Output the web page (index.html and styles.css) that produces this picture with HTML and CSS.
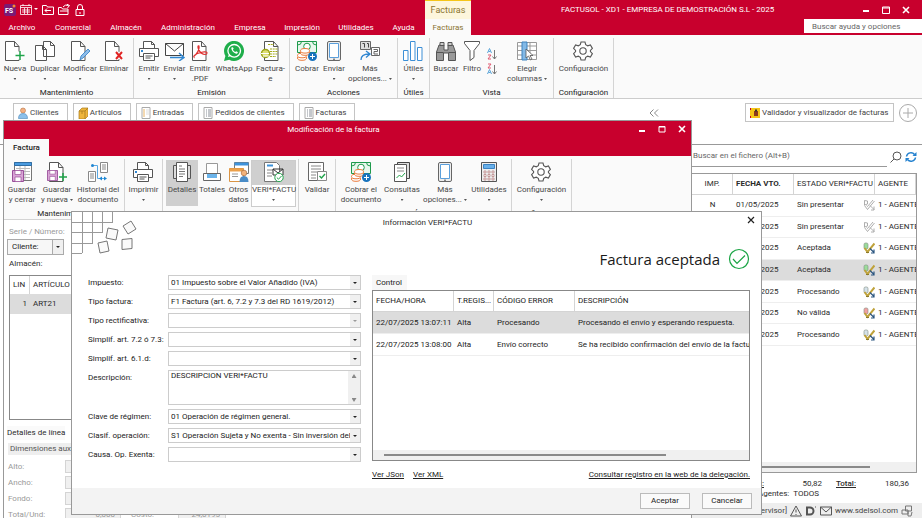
FILE: index.html
```html
<!DOCTYPE html>
<html lang="es">
<head>
<meta charset="utf-8">
<title>FACTUSOL</title>
<link rel="stylesheet" href="styles.css">
</head>
<body>
<svg class="sprite" aria-hidden="true">
  <symbol id="page" viewBox="0 0 20 20"><path d="M2.500 .5h9l4.500 5v14h-13.500zM11.500 .5v5h4.500" fill="#fff" stroke="#555"/></symbol>
  <symbol id="new" viewBox="0 0 20 20"><use href="#page" x="-2"/><path d="M15 10.500v8M11 14.500h8" stroke="#fff" stroke-width="4"/><path d="M15 10v9M10.500 14.500h9" stroke="#1fa34a" stroke-width="1.500"/></symbol>
  <symbol id="copy" viewBox="0 0 20 20"><path d="M8.500 .5h7l4 4v11h-11zM15.500 .5v4h4M.5 4.500h7l4 4v11h-11zM7.500 4.500v4h4" fill="#fff" stroke="#555"/></symbol>
  <symbol id="edit" viewBox="0 0 20 20"><use href="#page" x="-1"/><path d="M10 19l1-4 7-7 2 2-7 7z" fill="#8dbdea" stroke="#2f7cc4" stroke-width=".8"/></symbol>
  <symbol id="delete" viewBox="0 0 20 20"><use href="#page" x="-1"/><path d="M12 11l6 7M18 11l-6 7" stroke="#fff" stroke-width="4"/><path d="M12 11l6 7M18 11l-6 7" stroke="#e02424" stroke-width="2"/></symbol>
  <symbol id="printer" viewBox="0 0 20 20"><path d="M4.500 7V.5h8l3 3V7M12.500 .5v3h3" fill="#fff" stroke="#555"/><path d="M.5 7.500h19v8H.5z" fill="#fff" stroke="#555"/><path d="M4.500 12.500h11v7h-11zM6.500 15h7M6.500 17h5" fill="#fff" stroke="#555"/><path d="M2 9h2v2H2z" fill="#2f86d1"/></symbol>
  <symbol id="mail" viewBox="0 0 20 20"><path d="M.5 2.500h18v12H.5zL9.500 10l9-7.500" fill="#fff" stroke="#444"/><path d="M5 16.500h13M14 12l5 4.500-5 3.500" fill="none" stroke="#2f86d1" stroke-width="1.400"/></symbol>
  <symbol id="pdf" viewBox="0 0 20 20"><use href="#page"/><path d="M4 15c3-2 6-7 5-10-2-1-1 4 2 7 3 2 6 2 6 0s-5-1-8 0-6 3-5 4z" fill="none" stroke="#e02f2f" stroke-width="1.200"/></symbol>
  <symbol id="whats" viewBox="0 0 20 20"><path d="M0 20l1.400-5A10 10 0 1 1 5.200 18.700z" fill="#1fae4b"/><circle cx="10.200" cy="9.800" r="6.300" fill="none" stroke="#fff" stroke-width="1.300"/><path d="M4 16l1-3 2 2z" fill="#fff"/><path d="M7.500 6.500c-1 2 2.500 6.500 5.500 6.300l1-1.600-1.800-1-1 .8c-1-.3-2-1.500-2.300-2.400l.8-.8-.8-1.600z" fill="#fff"/></symbol>
  <symbol id="efact" viewBox="0 0 20 20"><use href="#page" x="2"/><path d="M8 3.500h6M10 8h8M10 10.500h8M10 13h8M10 15.500h6" stroke="#a5ab1c" stroke-dasharray="2 .7"/><circle cx="5.500" cy="12.500" r="4" fill="#dede74" stroke="#9ba315" stroke-width="1.500"/><path d="M1 12.500h8M3 15h6" stroke="#fff"/></symbol>
  <symbol id="cash" viewBox="0 0 20 20"><path d="M.5 .5h19v11H.5z" fill="#e9f7ed" stroke="#1f9a4c"/><circle cx="10" cy="5.500" r="3.300" fill="#fff" stroke="#1f9a4c"/><path d="M.5 4q4 0 4-3.500M15.500 .5q0 3.500 4 3.500" fill="none" stroke="#1f9a4c"/><g fill="#fff" stroke="#ea7a3b"><ellipse cx="5" cy="17" rx="4.500" ry="2.300"/><ellipse cx="5" cy="14.500" rx="4.500" ry="2.300"/><ellipse cx="8" cy="12" rx="4.500" ry="2.300"/><ellipse cx="8" cy="9.800" rx="4.500" ry="2.300"/></g><circle cx="15.500" cy="15.500" r="4.500" fill="#1873bd"/><path d="M15.500 13v5M13 15.500h5" stroke="#fff"/></symbol>
  <symbol id="phone" viewBox="0 0 20 20"><rect x="3.500" y=".5" width="13" height="19" rx="1.500" fill="#eee" stroke="#666"/><path d="M5.500 2.500h9v14h-9z" fill="#fff" stroke="#5b9fdb"/><path d="M9 18.200h2" stroke="#555"/></symbol>
  <symbol id="more" viewBox="0 0 20 20"><path d="M.5 .5h10v8H.5z" fill="#ddd" stroke="#666"/><path d="M2.500 2.500h2v4M7 2.500h1.500v4" fill="none" stroke="#444"/><path d="M11.500 6.500h8v8h-8zM13.500 8.500h4v2h-3.500v2.500h4" fill="#fff" stroke="#666"/><path d="M1 19q0-6 8-6M6 10l4 3-4 3.500" fill="none" stroke="#2f86d1" stroke-width="1.300"/></symbol>
  <symbol id="bars" viewBox="0 0 20 20"><path d="M.5 9.500h4.500v10H.5zM7.500 .5h4.500v19h-4.500zM14.500 6.500H19v13h-4.500z" fill="#fff" stroke="#3c8fd6"/></symbol>
  <symbol id="binoc" viewBox="0 0 20 20"><path d="M3 4h5v5h4V4h5l2.500 7v8.500h-7V12h-5v7.500h-7V11z" fill="#999" stroke="#555"/><path d="M4 1.500h4v3H4zM12 1.500h4v3h-4zM.5 11.500h7M12.500 11.500h7" fill="#ccc" stroke="#555"/></symbol>
  <symbol id="funnel" viewBox="0 0 20 20"><path d="M2.500 .5h15v2l-5.500 7v7l-4 3v-10l-5.500-7z" fill="#fff" stroke="#555"/></symbol>
  <symbol id="columns" viewBox="0 0 20 20"><path d="M.5 1.500h19v17H.5zM.5 5h19M.5 9.500h19M.5 14h19M7 1.500v17M13 1.500v17" fill="#fff" stroke="#999"/><path d="M5 1h5v18H5z" fill="#83b9e6" stroke="#3f83bd"/><path d="M9 8v9l2.500-2 2 4 1.500-1-2-3.500h3z" fill="#fff" stroke="#555" stroke-width=".8"/></symbol>
  <symbol id="gear" viewBox="0 0 20 20"><path d="M8 1h4l.7 2.700 2 1.100 2.700-.8 2 3.400-2 2v1.200l2 2-2 3.400-2.700-.8-2 1.100L12 19H8l-.7-2.700-2-1.100-2.700.8-2-3.400 2-2V9.400l-2-2 2-3.400 2.700.8 2-1.100z" fill="#fff" stroke="#555" stroke-width="1.100"/><circle cx="10" cy="10" r="3.200" fill="#fff" stroke="#555" stroke-width="1.100"/></symbol>
  <symbol id="floppy" viewBox="0 0 12 12"><path d="M.5 .5h11v11H.5z" fill="#d9a4d6" stroke="#99509a"/><path d="M3 .5h6v4H3zM3 7h6v4.500H3z" fill="#fff" stroke="#99509a" stroke-width=".7"/></symbol>
  <symbol id="saveclose" viewBox="0 0 20 20"><path d="M2.500 .5h17v18h-17z" fill="#fff" stroke="#777"/><path d="M2.500 .5h17v3h-17z" fill="#4a9be0" stroke="#2f6ea5"/><path d="M4 6.500h14M4 9.500h14M4 12.500h14M4 15.500h14M8 4v12M13 4v14" stroke="#bbb"/><use href="#floppy" x="0" y="8" width="12" height="12"/></symbol>
  <symbol id="savenew" viewBox="0 0 20 20"><use href="#page"/><use href="#floppy" x="0" y="8" width="11" height="11"/><path d="M16 11v8M12 15h8" stroke="#1fa34a" stroke-width="1.500"/></symbol>
  <symbol id="history" viewBox="0 0 20 20"><path d="M12.500 .5h7v10h-7zM.5 9.500h7v10h-7zM14 3h4M14 5h4M14 7h4M2 12h4M2 14h4M2 16h4" fill="#fff" stroke="#888"/><path d="M5 3.500h4.500v13H18" fill="none" stroke="#58a8e4"/><circle cx="4.500" cy="3.500" r="1.500" fill="#1e86d2"/><path d="M11 16.500l3-2v4zM19 16.500l-3-2v4z" fill="#1e86d2"/></symbol>
  <symbol id="details" viewBox="0 0 20 20"><path d="M1.500 3.500h17v13h-17z" fill="#ddd" stroke="#555"/><path d="M4.500 .5h11v19h-11z" fill="#fff" stroke="#555"/><path d="M7 4h3M7 7h6M7 9.500h6M7 12h6M7 14.500h4" stroke="#777"/></symbol>
  <symbol id="totals" viewBox="0 0 20 20"><path d="M4.500 1.500h11v14h-11z" fill="#fff" stroke="#999"/><path d="M1.500 11.500h17v7h-17z" fill="#fff" stroke="#666"/><path d="M5 12h10v4H5z" fill="#6ab3ea"/></symbol>
  <symbol id="other" viewBox="0 0 20 20"><path d="M5.500 .5h14v11h-14z" fill="#fff" stroke="#777"/><path d="M5.500 .5h14v3h-14z" fill="#3f93db"/><path d="M.5 6.500h14v13H.5z" fill="#fff" stroke="#d99444"/><path d="M.5 6.500h14v3H.5z" fill="#eca04a"/><path d="M3 12h6M3 14.500h6" stroke="#999"/><circle cx="15" cy="11" r="2.800" fill="#f2b27b" stroke="#9c6236" stroke-width=".6"/><path d="M10.500 20q0-6 4.500-6t4.500 6z" fill="#4a8cc7"/></symbol>
  <symbol id="verified" viewBox="0 0 20 20"><path d="M.5 .5h12l3 3v16H.5z" fill="#fff" stroke="#777"/><path d="M3 3.500h6" stroke="#3c93da" stroke-width="2"/><path d="M3 8h7M3 11h5M3 14h5" stroke="#888"/><path d="M9 7h10v6H9zM9 7l5 4 5-4" fill="#fff" stroke="#333"/><circle cx="15" cy="15.500" r="4.200" fill="#fff" stroke="#1fa34a"/><path d="M12.800 15.500l1.700 1.700 3-3.200" fill="none" stroke="#1fa34a"/></symbol>
  <symbol id="validate" viewBox="0 0 20 20"><path d="M1.500 .5h15v18h-15z" fill="#fff" stroke="#666"/><path d="M4 4h10M4 7h10M4 10h6M4 13h5M4 16h5" stroke="#888"/><path d="M10.500 9.500h9v9h-9z" fill="#fff" stroke="#888"/><path d="M12.500 14l2 2 3.500-4" fill="none" stroke="#1fa34a" stroke-width="1.400"/></symbol>
  <symbol id="queries" viewBox="0 0 20 20"><path d="M5.500 .5h12v16h-12z" fill="#ddd" stroke="#444"/><path d="M2.500 2.500h12v17h-12z" fill="#fff" stroke="#555"/><path d="M5 6h7M5 9h7" stroke="#888"/><path d="M4.500 16l3-3 2 2 3.500-4" fill="none" stroke="#1fa34a"/></symbol>
  <symbol id="calc" viewBox="0 0 20 20"><path d="M2.500 .5h15v19h-15z" fill="#eee" stroke="#555"/><path d="M4.500 2.500h11v4h-11z" fill="#68b0ea" stroke="#3c83c2"/><path d="M5 9h2v2H5zM9 9h2v2H9zM13 9h2v2h-2zM5 12.500h2v2H5zM9 12.500h2v2H9zM13 12.500h2v2h-2zM5 16h2v2H5zM9 16h2v2H9zM13 16h2v2h-2z" fill="#fff" stroke="#a66" stroke-width=".6"/></symbol>
  <symbol id="doc" viewBox="0 0 10 12"><path d="M1 .5h8v11H1z" fill="#fff" stroke="#aaa"/><path d="M3 3h1M5 3h3M3 5h1M5 5h3M3 7h1M5 7h3M3 9h1M5 9h3" stroke="#8a9099"/></symbol>
  <symbol id="signed" viewBox="0 0 12 12"><rect x="1" y="1" width="4" height="6" rx="1.500" fill="currentColor" stroke="#7d8a7d" stroke-width=".6"/><path d="M1.500 6l3 4 7-8.500" fill="none" stroke="#bfa23a" stroke-width="2"/><path d="M3 10.500h3" stroke="#8c7a2c"/><path d="M7 6.500l4 4M11 7.500v3.500H8" fill="none" stroke="#2b5680" stroke-width="1.200"/></symbol>
  <symbol id="unsigned" viewBox="0 0 12 12"><path d="M1.500 1.500l3 .5v3l-3 1zM1.500 6.500l3 4 7-8.500M3.500 6.500l1 1L10 1M7 6.500l4 4M11 7.500v3.500H8" fill="none" stroke="#999" stroke-width=".8"/></symbol>
</svg>

<div class="app">
  <header class="titlebar">
    <div class="quick">
      <svg class="logo" viewBox="0 0 12 12"><rect x="0" y="0" width="12" height="12" rx="2" fill="#7b1a75"/><circle cx="10" cy="2" r="1.500" fill="#ff8a2a"/><text x="1" y="9" class="logo-text">FS</text></svg>
      <svg class="calendar" viewBox="0 0 18 12"><path d="M.5 1.500h11v9H.5zM.5 3.500h11M3 0v2M9 0v2M2 6h8M2 8h8M4.500 4v6M7.500 4v6" fill="none" stroke="#fff" stroke-width=".8"/><path d="M14 4h4l-2 2z" fill="#fff"/></svg>
      <svg viewBox="0 0 12 12"><path d="M.5 10.500v-9h4l1 1.500h6v7.500zM3 6.500h6M5 4.500l-2 2 2 2" fill="none" stroke="#fff"/></svg>
      <svg viewBox="0 0 12 12"><path d="M.5 10.500V3.500h3l1 1.500h5.500v5.500zM5 3q2-3 5.500-1.500M8.500 0l3 1.500-2 2.500M2 7h8" fill="none" stroke="#fff"/></svg>
      <svg viewBox="0 0 12 12"><path d="M2 5.500h8v6H2zM3.500 5.500V3a2.500 2.500 0 0 1 5 0v2.500M6 8v2" fill="none" stroke="#fff"/></svg>
    </div>
    <div class="context-title">Facturas</div>
    <h1>FACTUSOL - XD1 - EMPRESA DE DEMOSTRACIÓN S.L - 2025</h1>
    <div class="win-controls">
      <button aria-label="Minimizar"><svg viewBox="0 0 8 8"><path d="M1 5h6" stroke="#fff" stroke-width="2"/></svg></button>
      <button aria-label="Maximizar"><svg viewBox="0 0 8 8"><path d="M.5 1h7v6.500h-7zM.5 2h7" fill="none" stroke="#fff"/></svg></button>
      <button aria-label="Cerrar"><svg viewBox="0 0 8 8"><path d="M1 1l6 6M7 1L1 7" stroke="#fff" stroke-width="1.600"/></svg></button>
    </div>
  </header>
  <nav class="menubar">
    <a href="#">Archivo</a><a href="#">Comercial</a><a href="#">Almacén</a><a href="#">Administración</a><a href="#">Empresa</a><a href="#">Impresión</a><a href="#">Utilidades</a><a href="#">Ayuda</a><a href="#" class="current">Facturas</a>
    <input class="help-search" type="text" placeholder="Buscar ayuda y opciones" aria-label="Buscar ayuda y opciones">
  </nav>

  <div class="ribbon main-ribbon">
    <section class="group g-maint"><div class="tools">
      <button><svg><use href="#new"/></svg>Nueva<i class="caret"></i></button>
      <button><svg><use href="#copy"/></svg>Duplicar<i class="caret"></i></button>
      <button><svg><use href="#edit"/></svg>Modificar<i class="caret"></i></button>
      <button><svg><use href="#delete"/></svg>Eliminar</button></div><h2>Mantenimiento</h2></section>
    <section class="group g-emit"><div class="tools">
      <button><svg><use href="#printer"/></svg>Emitir<i class="caret"></i></button>
      <button><svg><use href="#mail"/></svg>Enviar<i class="caret"></i></button>
      <button><svg><use href="#pdf"/></svg>Emitir<br>.PDF</button>
      <button><svg><use href="#whats"/></svg>WhatsApp</button>
      <button><svg><use href="#efact"/></svg>Factura-<br>e</button></div><h2>Emisión</h2></section>
    <section class="group g-actions"><div class="tools">
      <button><svg><use href="#cash"/></svg>Cobrar</button>
      <button><svg><use href="#phone"/></svg>Enviar<i class="caret"></i></button>
      <button><svg><use href="#more"/></svg>Más<br>opciones... <i class="caret inline"></i></button></div><h2>Acciones</h2></section>
    <section class="group g-utils"><div class="tools">
      <button><svg><use href="#bars"/></svg>Útiles<i class="caret"></i></button></div><h2>Útiles</h2></section>
    <section class="group g-view"><div class="tools">
      <button><svg><use href="#binoc"/></svg>Buscar</button>
      <button><svg><use href="#funnel"/></svg>Filtro</button>
      <div class="sorters">
        <button aria-label="Orden ascendente"><svg viewBox="0 0 10 12"><path d="M.5 5L2.500 .5l2 4.500M1.500 3.500h2" fill="none" stroke="#5aa5d8"/><path d="M1 7h3l-3 4h3" fill="none" stroke="#e05a72"/><path d="M7.500 2v9M5.500 8.500l2 2.500 2-2.500" fill="none" stroke="#777"/></svg></button>
        <button aria-label="Orden descendente"><svg viewBox="0 0 10 12"><path d="M1 1h3l-3 4h3" fill="none" stroke="#e05a72"/><path d="M.5 11l2-4.500 2 4.500M1.500 9.500h2" fill="none" stroke="#5aa5d8"/><path d="M7.500 2v9M5.500 8.500l2 2.500 2-2.500" fill="none" stroke="#777"/></svg></button>
      </div>
      <button><svg><use href="#columns"/></svg>Elegir<br>columnas <i class="caret inline"></i></button></div><h2>Vista</h2></section>
    <section class="group g-config"><div class="tools">
      <button><svg><use href="#gear"/></svg>Configuración</button></div><h2>Configuración</h2></section>
  </div>

  <div class="shortcuts">
    <button><svg viewBox="0 0 10 12"><circle cx="5" cy="3.500" r="2.500" fill="#f4b183" stroke="#b57444" stroke-width=".6"/><path d="M.5 11.500q0-5 4.500-5t4.500 5z" fill="#8cc0ea" stroke="#4986b8" stroke-width=".6"/></svg>Clientes</button>
    <button><svg viewBox="0 0 10 12"><path d="M1 4l3-3h6v8l-3 3H1z" fill="#efb63c" stroke="#a97c1e" stroke-width=".7"/><path d="M1 4h6v8M7 4l3-3M4 4v3" fill="none" stroke="#a97c1e" stroke-width=".8"/></svg>Artículos</button>
    <button><svg viewBox="0 0 10 12"><path d="M1 .5h8v11H1z" fill="#fff" stroke="#aaa"/><path d="M3 2v8" stroke="#eab464"/><path d="M5 3h3M5 5h3M5 7h3" stroke="#ddd"/></svg>Entradas</button>
    <button><svg><use href="#doc"/></svg>Pedidos de clientes</button>
    <button><svg><use href="#doc"/></svg>Facturas</button>
    <button class="collapse" aria-label="Contraer"><svg viewBox="0 0 10 8"><path d="M4.500 .5L1 4l3.500 3.500M9 .5L5.500 4 9 7.500" fill="none" stroke="#888"/></svg></button>
    <button class="validator"><svg viewBox="0 0 10 12"><path d="M0 1h10v10H0z" fill="#f5c518"/><path d="M0 1h1v2H0zM0 9h1v2H0z" fill="#c8002d"/><path d="M4 4h4v5H4z" fill="#8b3a1d"/><path d="M5 2.500h2v2H5z" fill="#333"/></svg>Validador y visualizador de facturas</button>
    <button class="add" aria-label="Añadir"><svg viewBox="0 0 18 18"><circle cx="9" cy="9" r="8.500" fill="#fff" stroke="#aaa"/><path d="M9 4v10M4 9h10" stroke="#aaa"/></svg></button>
  </div>

  <main class="records">
    <div class="file-search">
      <input type="text" placeholder="Buscar en el fichero (Alt+B)" aria-label="Buscar en el fichero">
      <svg viewBox="0 0 12 12"><circle cx="7" cy="5" r="4" fill="none" stroke="#555"/><path d="M4 8l-3.500 3.500" stroke="#555"/></svg>
      <svg viewBox="0 0 12 12"><path d="M1.500 5.500A4.500 4.500 0 0 1 9.500 3.500M10.500 6.500a4.500 4.500 0 0 1-8 2" fill="none" stroke="#2381cf" stroke-width="1.500"/><path d="M11.500 1v4h-4zM.5 11V7h4z" fill="#2381cf"/></svg>
    </div>
    <div class="record-box">
      <table>
        <colgroup><col class="c-imp"><col class="c-date"><col class="c-state"><col class="c-agent"></colgroup>
        <thead><tr><th>IMP.</th><th><b>FECHA VTO.</b></th><th>ESTADO VERI*FACTU</th><th>AGENTE</th></tr></thead>
        <tbody>
          <tr><td>N</td><td>01/05/2025</td><td>Sin presentar<svg><use href="#unsigned"/></svg></td><td>1 - AGENTE</td></tr>
          <tr><td>N</td><td>01/05/2025</td><td>Sin presentar<svg><use href="#unsigned"/></svg></td><td>1 - AGENTE</td></tr>
          <tr><td>N</td><td>01/05/2025</td><td>Aceptada<svg class="ok"><use href="#signed"/></svg></td><td>1 - AGENTE</td></tr>
          <tr class="selected"><td>N</td><td>01/05/2025</td><td>Aceptada<svg class="ok"><use href="#signed"/></svg></td><td>1 - AGENTE</td></tr>
          <tr><td>N</td><td>01/05/2025</td><td>Procesando<svg class="wait"><use href="#signed"/></svg></td><td>1 - AGENTE</td></tr>
          <tr><td>N</td><td>01/05/2025</td><td>No válida<svg class="bad"><use href="#signed"/></svg></td><td>1 - AGENTE</td></tr>
          <tr><td>N</td><td>01/05/2025</td><td>Procesando<svg class="wait"><use href="#signed"/></svg></td><td>1 - AGENTE</td></tr>
        </tbody>
      </table>
      <div class="hscroll"><span></span></div>
    </div>
    <div class="totals"><a href="#">Base:</a><span>50,82</span><a href="#">Total:</a><span>180,36</span></div>
    <div class="agents"><span>Agentes:</span><span>TODOS</span></div>
    <footer class="status">
      <span>[Supervisor]</span>
      <svg viewBox="0 0 12 12"><path d="M6 1l5.500 10H.5zM6 4.500v3M6 9v1" fill="none" stroke="#555"/></svg>
      <svg viewBox="0 0 12 12"><path d="M2 2.500h3a3.500 3.500 0 0 1 0 7H2z" fill="none" stroke="#555" stroke-width="2"/><path d="M10 2h1" stroke="#555"/></svg>
      <svg viewBox="0 0 12 12"><path d="M.5 2h11v8H.5zL6 7l5.500-5" fill="none" stroke="#555"/></svg>
      <a href="#">www.sdelsol.com</a>
      <svg viewBox="0 0 12 12"><path d="M4.500 1h6v5h-6zM1 5h6v4H1zM7 6v5h3l1-4" fill="none" stroke="#777"/></svg>
    </footer>
  </main>
</div>

<section class="window invoice" aria-label="Modificación de la factura">
  <header class="invoice-head">
    <div class="invoice-title"><h2>Modificación de la factura</h2>
      <div class="win-controls">
        <button aria-label="Minimizar"><svg viewBox="0 0 8 8"><path d="M1 6h6" stroke="#fff" stroke-width="2"/></svg></button>
        <button aria-label="Maximizar"><svg viewBox="0 0 8 8"><path d="M1 1.500h6V7H1zM1 2h6" fill="none" stroke="#fff"/></svg></button>
        <button aria-label="Cerrar"><svg viewBox="0 0 8 8"><path d="M1 1l6 6M7 1L1 7" stroke="#fff" stroke-width="1.600"/></svg></button>
      </div>
    </div>
    <a href="#" class="invoice-tab">Factura</a>
  </header>
  <div class="ribbon invoice-ribbon">
    <section class="group i-maint"><div class="tools">
      <button><svg><use href="#saveclose"/></svg>Guardar<br>y cerrar</button>
      <button><svg><use href="#savenew"/></svg>Guardar<br>y nueva <i class="caret inline"></i></button>
      <button><svg><use href="#history"/></svg>Historial del<br>documento</button></div><h2>Mantenimiento</h2></section>
    <section class="group i-print"><div class="tools">
      <button><svg><use href="#printer"/></svg>Imprimir<i class="caret"></i></button></div><h2>Emisión</h2></section>
    <section class="group i-show"><div class="tools">
      <button class="pressed"><svg><use href="#details"/></svg>Detalles</button>
      <button><svg><use href="#totals"/></svg>Totales</button>
      <button><svg><use href="#other"/></svg>Otros<br>datos</button>
      <button class="hot"><svg><use href="#verified"/></svg>VERI*FACTU<i class="caret"></i></button></div><h2>Mostrar</h2></section>
    <section class="group i-lines"><div class="tools">
      <button><svg><use href="#validate"/></svg>Validar</button></div><h2>Líneas</h2></section>
    <section class="group i-utils"><div class="tools">
      <button><svg><use href="#cash"/></svg>Cobrar el<br>documento</button>
      <button><svg><use href="#queries"/></svg>Consultas<i class="caret"></i></button>
      <button><svg><use href="#phone"/></svg>Más<br>opciones... <i class="caret inline"></i></button>
      <button><svg><use href="#calc"/></svg>Utilidades<i class="caret"></i></button></div><h2>Útiles</h2></section>
    <section class="group i-config"><div class="tools">
      <button><svg><use href="#gear"/></svg>Configuración<i class="caret"></i></button></div><h2>Configuración</h2></section>
  </div>
  <div class="invoice-body">
    <span class="muted">Serie / Número:</span>
    <div class="combo client"><select aria-label="Cliente"><option>Cliente:</option></select></div>
    <span class="store">Almacén:</span>
    <div class="lines">
      <table><colgroup><col class="c-lin"><col></colgroup>
        <thead><tr><th>LIN</th><th>ARTÍCULO</th></tr></thead>
        <tbody><tr class="selected"><td>1</td><td>ART21</td></tr></tbody></table>
    </div>
    <h3>Detalles de línea</h3>
    <h4>Dimensiones auxiliares</h4>
    <div class="dims">
      <label for="alto">Alto:</label><input id="alto" disabled>
      <label for="ancho">Ancho:</label><input id="ancho" disabled>
      <label for="fondo">Fondo:</label><input id="fondo" disabled>
      <label for="total">Total/Und:</label><input id="total" disabled value="0,000"><label for="costo">Costo:</label><input id="costo" disabled value="24,0195">
    </div>
  </div>
</section>

<section class="window dialog" role="dialog" aria-label="Información VERI*FACTU">
  <header class="dialog-head">
    <svg class="tiles" viewBox="0 0 66 42"><path d="M0 10.500h41M0 20.500h31M0 31.500h21M0 41.500h10M10.500 0v41M20.500 0v31M30.500 0v21M40.500 0v11" fill="none" stroke="#999"/><g fill="#fafafa" stroke="#777"><path d="M36 16l10 2-2 10-10-2z"/><path d="M51 14l8-5 5 8-8 5z"/><path d="M26 31l9-2 2 10-9 2z"/><path d="M50 27.500l10-1v10l-10 1z"/></g></svg>
    <h2>Información VERI*FACTU</h2>
    <button aria-label="Cerrar"><svg viewBox="0 0 8 8"><path d="M1 1l6 6M7 1L1 7" stroke="#222" stroke-width="1.200"/></svg></button>
  </header>
  <div class="result">Factura aceptada<svg viewBox="0 0 22 22"><circle cx="11" cy="11" r="9.500" fill="none" stroke="#1aa444" stroke-width="1.200"/><path d="M5 11l4 4.500 8-8" fill="none" stroke="#1aa444" stroke-width="1.200"/></svg></div>
  <div class="dialog-body">
    <form class="fields">
      <label for="f1">Impuesto:</label><div class="combo"><select id="f1"><option>01 Impuesto sobre el Valor Añadido (IVA)</option></select></div>
      <label for="f2">Tipo factura:</label><div class="combo"><select id="f2"><option>F1 Factura (art. 6, 7.2 y 7.3 del RD 1619/2012)</option></select></div>
      <label for="f3">Tipo rectificativa:</label><div class="combo off"><select id="f3" disabled><option></option></select></div>
      <label for="f4">Simplif. art. 7.2 ó 7.3:</label><div class="combo"><select id="f4"><option></option></select></div>
      <label for="f5">Simplif. art. 6.1.d:</label><div class="combo"><select id="f5"><option></option></select></div>
      <label for="f6">Descripción:</label><div class="memo"><textarea id="f6">DESCRIPCION VERI*FACTU</textarea><div class="vscroll"><i class="up"></i><i class="down"></i></div></div>
      <label for="f7">Clave de régimen:</label><div class="combo"><select id="f7"><option>01 Operación de régimen general.</option></select></div>
      <label for="f8">Clasif. operación:</label><div class="combo"><select id="f8"><option>S1 Operación Sujeta y No exenta - Sin inversión del</option></select></div>
      <label for="f9">Causa. Op. Exenta:</label><div class="combo"><select id="f9"><option></option></select></div>
    </form>
    <div class="control">
      <span class="control-tab">Control</span>
      <div class="control-box">
        <table>
          <colgroup><col class="k-date"><col class="k-type"><col class="k-code"><col></colgroup>
          <thead><tr><th>FECHA/HORA</th><th>T.REGIS...</th><th>CÓDIGO ERROR</th><th>DESCRIPCIÓN</th></tr></thead>
          <tbody>
            <tr class="selected"><td>22/07/2025 13:07:11</td><td>Alta</td><td>Procesando</td><td>Procesando el envío y esperando respuesta.</td></tr>
            <tr><td>22/07/2025 13:08:00</td><td>Alta</td><td>Envío correcto</td><td>Se ha recibido confirmación del envío de la factura</td></tr>
          </tbody>
        </table>
        <div class="hscroll"><span></span></div>
      </div>
      <div class="links"><a href="#">Ver JSon</a><a href="#">Ver XML</a><a href="#" class="far">Consultar registro en la web de la delegación.</a></div>
    </div>
  </div>
  <footer class="dialog-foot"><button>Aceptar</button><button>Cancelar</button></footer>
</section>
</body>
</html>
```
FILE: styles.css
```css
:root {
  --red: #c8002d;
  --line: #d4d4d4;
  --text: #2b2b2b;
  --soft: #f3f3f3;
  --pick: #dcdcdc;
}
* { box-sizing: border-box; }
html, body { height: 100%; }
body {
  margin: 0;
  overflow: hidden;
  position: relative;
  background: #fff;
  color: var(--text);
  font: 8px/10px Roboto, "Open Sans", sans-serif;
}
button, input, select, textarea { font: inherit; color: inherit; margin: 0; }
button { background: none; border: 0; padding: 0; white-space: nowrap; }
h1, h2, h3, h4 { margin: 0; font: inherit; }
a { color: inherit; text-decoration: none; }
svg { display: block; flex: none; }
.sprite { position: absolute; width: 0; height: 0; }
table { border-collapse: separate; border-spacing: 0; table-layout: fixed; width: 100%; }
th, td { font-weight: 400; text-align: left; padding: 0 3px; white-space: nowrap; overflow: hidden; }
.selected td { background: var(--pick); }

/* Main window */
.app { height: 100%; display: flex; flex-direction: column; }
.titlebar { display: grid; grid-template-columns: 425px 46px 1fr 60px; height: 19px; background: var(--red); color: #fff; align-items: center; }
.quick { display: flex; gap: 4px; padding-left: 4px; align-items: center; }
.quick svg { width: 12px; height: 12px; }
.quick .calendar { width: 18px; }
.logo-text { font-size: 7px; font-weight: 700; fill: #fff; }
.context-title { align-self: stretch; background: #fdf6dc; border-top: 1px solid #f5c518; color: #8a7430; font-size: 9px; line-height: 18px; text-align: center; }
.titlebar h1 { padding-left: 90px; white-space: nowrap; }
.win-controls { display: flex; gap: 12px; align-items: center; }
.win-controls svg { width: 8px; height: 8px; }
.menubar { display: grid; grid-template-columns: 44px 58px 48px 76px 48px 56px 52px 43px 46px 1fr; height: 16px; background: var(--red); color: #fff; }
.menubar a { text-align: center; line-height: 18px; height: 16px; }
.menubar .current { background: #fafafa; color: #8a7430; }
.help-search { justify-self: end; width: 118px; height: 14px; border: 0; background: #fff; padding: 0 8px; }
.help-search::placeholder, .file-search input::placeholder { color: #666; opacity: 1; }

.ribbon { display: flex; background: #fafafa; color: #484848; }
.main-ribbon { height: 64px; border-bottom: 1px solid #ccc; padding: 3px 0 0; }
.group { flex: none; display: flex; flex-direction: column; justify-content: space-between; border-right: 1px solid var(--line); }
.group h2 { text-align: center; color: #222; }
.tools { display: grid; padding-top: 3px; }
.tools button { align-self: start; justify-self: center; min-width: 0; text-align: center; }
.tools button > svg { width: 20px; height: 20px; margin: 0 auto 3px; }
.caret { display: block; width: 3px; height: 2px; margin: 4px auto; background: #555; clip-path: polygon(0 0, 100% 0, 50% 100%); }
.caret.inline { display: inline-block; margin: 0; vertical-align: middle; }
.g-maint { width: 134px; } .g-maint .tools { grid-template-columns: 30px 30px 40px 28px; }
.g-emit { width: 156px; } .g-emit .tools { grid-template-columns: 30px 21px 30px 38px 35px; }
.g-actions { width: 108px; } .g-actions .tools { grid-template-columns: 34px 20px 52px; }
.g-utils { width: 32px; } .g-utils .tools { grid-template-columns: 1fr; }
.g-view { width: 124px; } .g-view .tools { grid-template-columns: 32px 20px 20px 50px; }
.g-config { width: 60px; } .g-config .tools { grid-template-columns: 1fr; }
.sorters { display: grid; align-content: start; gap: 3px; padding-top: 7px; }
.tools .sorters svg { width: 10px; height: 12px; margin: 0; }

.shortcuts { display: flex; align-items: flex-start; gap: 5px; height: 46px; padding: 4px 5px 0 13px; border-bottom: 1px solid #999; color: #444; }
.shortcuts button { display: flex; align-items: center; gap: 2px; height: 19px; padding: 0 8px 0 4px; border: 1px solid #c4c4c4; background: #fff; }
.shortcuts svg { width: 10px; height: 12px; }
.shortcuts .collapse, .shortcuts .add { border: 0; padding: 0; }
.shortcuts .collapse { margin: 0 81px 0 auto; }
.shortcuts .collapse svg { width: 10px; height: 8px; }
.shortcuts .validator { width: 149px; }
.shortcuts .add svg { width: 18px; height: 18px; }

.records { flex: 1; align-self: flex-end; width: 230px; display: flex; flex-direction: column; min-height: 0; }
.file-search { display: flex; align-items: center; gap: 3px; height: 21px; margin: 1px 5px 6px 0; }
.file-search input { flex: 1; min-width: 0; align-self: stretch; border: 0; border-bottom: 1px solid #999; padding: 0 1px; background: none; }
.file-search svg { width: 12px; height: 12px; }
.record-box { flex: 1; display: flex; flex-direction: column; justify-content: space-between; margin-right: 5px; border: 1px solid #999; border-left: 0; min-height: 0; }
.record-box table { height: 172px; }
.record-box th { height: 21px; border-right: 1px solid var(--line); border-bottom: 1px solid var(--line); }
.record-box td { border-bottom: 1px solid #eee; }
.record-box th:first-child, .record-box td:first-child { text-align: center; }
.record-box td svg { float: right; width: 12px; height: 12px; margin: -1px 0; }
.c-imp { width: 41px; } .c-date { width: 61px; } .c-state { width: 81px; }
.record-box td:nth-child(3) { padding-right: 0; }
.ok { color: #9bdc9b; } .wait { color: #d5e2ea; } .bad { color: #f2a0a0; }
.hscroll { height: 10px; background: #f0f0f0; padding: 4px 46px 0 11px; }
.hscroll span { display: block; height: 2px; background: #8a8a8a; }
.totals { display: grid; grid-template-columns: 72px 58px 14px 18px 1fr; padding: 6px 13px 0 0; height: 16px; }
.totals a { text-decoration: underline; font-weight: 500; }
.totals a:first-child { text-align: right; }
.totals span { text-align: right; }
.totals a:nth-child(3) { grid-column: 4; }
.agents { display: flex; gap: 4px; padding-left: 66px; height: 14px; }
.status { display: flex; align-items: center; justify-content: flex-end; gap: 3px; height: 15px; padding-right: 9px; background: #eee; color: #444; }
.status svg { width: 12px; height: 12px; }

/* Floating windows */
.window { position: absolute; background: #fff; border: 1px solid #999; display: flex; flex-direction: column; }
.invoice { left: 3px; right: 230px; top: 120px; bottom: 0; border-bottom: 0; overflow: hidden; }
.invoice-head { background: var(--red); color: #fff; height: 36px; flex: none; margin: -1px -1px 0; display: flex; flex-direction: column; justify-content: space-between; align-items: flex-start; }
.invoice-title { align-self: stretch; display: flex; align-items: center; height: 18px; }
.invoice-title h2 { flex: 1; text-align: center; padding: 2px 0 0 26px; }
.invoice-title .win-controls { padding-right: 6px; }
.invoice-tab { margin-left: 1px; width: 45px; height: 17px; line-height: 18px; background: #fafafa; color: #222; text-align: center; font-weight: 500; }
.invoice-ribbon { height: 64px; flex: none; padding-top: 3px; border-bottom: 1px solid var(--line); }
.invoice-ribbon .tools button { padding-top: 2px; }
.invoice-ribbon .tools { padding-top: 1px; }
.i-maint { width: 121px; } .i-maint .tools { grid-template-columns: 36px 34px 48px; }
.i-print { width: 38px; } .i-print .tools { grid-template-columns: 1fr; }
.i-show { width: 136px; padding-left: 3px; } .i-show .tools { grid-template-columns: 32px 28px 25px 45px; }
.i-lines { width: 37px; } .i-lines .tools { grid-template-columns: 1fr; }
.i-utils { width: 176px; } .i-utils .tools { grid-template-columns: 50px 32px 54px 34px; }
.i-config { width: 60px; } .i-config .tools { grid-template-columns: 1fr; }
.invoice-ribbon .tools .pressed { width: 32px; background: #cfcfcf; padding-bottom: 11px; }
.invoice-ribbon .tools .hot { width: 45px; padding: 1px 0; border: 1px solid #ccc; background: linear-gradient(#cfcfcf 24px, #fff 24px); }
.invoice-body { padding: 7px 3px 0; display: flex; flex-direction: column; align-items: flex-start; }
.muted { color: #999; padding-left: 2px; }
.client { width: 57px; margin: 2px 0 4px; }
.store { padding-left: 2px; }
.lines { align-self: stretch; margin: 6px 0 6px 2px; height: 145px; border: 1px solid #888; }
.lines th { height: 18px; border-right: 1px solid var(--line); }
.lines td { height: 20px; }
.lines td:first-child { text-align: right; }
.c-lin { width: 20px; }
.invoice-body h3 { background: #fafafa; padding: 2px 0; height: 14px; }
.invoice-body h4 { background: #eee; align-self: stretch; margin: 3px 0 5px 1px; padding: 1px 2px 0; height: 12px; color: #555; }
.dims { display: grid; grid-template-columns: 57px 56px 57px 48px; row-gap: 3px; color: #999; padding-left: 1px; }
.dims label { line-height: 13px; }
.dims label:nth-of-type(-n+4) { grid-column: 1; }
.dims label:last-of-type { padding-left: 10px; }
.dims input { height: 13px; width: 100%; border: 1px solid var(--line); background: #f0f0f0; text-align: right; padding: 0 5px; }

.combo { position: relative; height: 15px; }
.combo select { appearance: none; width: 100%; height: 100%; border: 1px solid #ccc; border-radius: 0; background: #fff; color: #222; padding: 0 10px 0 2px; opacity: 1; }
.combo::before { content: ""; position: absolute; right: 1px; top: 1px; bottom: 1px; width: 10px; background: #f0f0f0; pointer-events: none; }
.combo::after { content: ""; position: absolute; right: 4px; top: 7px; width: 4px; height: 2px; background: #222; clip-path: polygon(0 0, 100% 0, 50% 100%); pointer-events: none; }
.combo.off::after { background: #999; }
.client.combo { height: 16px; }
.client.combo select { background: #f7f7f7; border-color: #aaa; padding-left: 4px; }
.client.combo::before { border-left: 1px solid #aaa; }

.dialog { left: 71px; right: 160px; top: 211px; bottom: 3px; }
.dialog-head { display: grid; grid-template-columns: 66px 1fr 66px; height: 42px; flex: none; }
.tiles { width: 66px; height: 42px; }
.dialog-head h2 { text-align: center; padding: 6px 0 0 22px; }
.dialog-head button { justify-self: end; align-self: start; padding: 4px 6px; }
.dialog-head button svg { width: 8px; height: 8px; }
.result { display: flex; justify-content: flex-end; align-items: center; gap: 8px; height: 22px; margin: -6px 11px 4px 0; font: 15px/22px "Open Sans", sans-serif; color: #1a1a1a; }
.result svg { width: 22px; height: 22px; }
.dialog-body { flex: 1; display: grid; grid-template-columns: 273px 1fr; column-gap: 11px; padding: 1px 11px 8px 16px; min-height: 0; color: #222; }
.fields { display: grid; grid-template-columns: 80px 1fr; align-content: start; row-gap: 4px; }
.fields label { line-height: 15px; white-space: nowrap; }
.memo { display: grid; grid-template-columns: 1fr 12px; height: 35px; border: 1px solid #ccc; }
.memo textarea { border: 0; resize: none; padding: 0 2px; overflow: hidden; background: #fff; }
.vscroll { background: #f0f0f0; display: flex; flex-direction: column; justify-content: space-between; align-items: center; padding: 3px 0 2px; }
.vscroll i { width: 5px; height: 4px; background: #888; clip-path: polygon(0 100%, 100% 100%, 50% 0); }
.vscroll .down { clip-path: polygon(0 0, 100% 0, 50% 100%); }
.control { display: flex; flex-direction: column; min-width: 0; }
.control-tab { align-self: flex-start; background: #f7f7f7; padding: 3px 4px; width: 35px; height: 15px; }
.control-box { flex: 1; border: 1px solid #888; display: flex; flex-direction: column; justify-content: space-between; min-height: 0; }
.control-box th { height: 21px; border-right: 1px solid var(--line); border-bottom: 1px solid var(--line); }
.control-box th:last-child { border-right: 0; }
.control-box td { height: 22px; border-bottom: 1px solid #eee; }
.control-box th, .control-box td { padding: 0 0 0 3px; }
.control-box .hscroll { padding-right: 83px; }
.k-date { width: 81px; } .k-type { width: 40px; } .k-code { width: 81px; }
.links { display: flex; gap: 9px; padding-top: 9px; }
.links a { text-decoration: underline; }
.links .far { margin-left: auto; }
.dialog-foot { background: var(--soft); height: 26px; flex: none; display: flex; justify-content: flex-end; align-items: center; gap: 12px; padding-right: 9px; }
.dialog-foot button { width: 50px; height: 16px; border: 1px solid #bbb; background: #fafafa; color: #222; }
```
